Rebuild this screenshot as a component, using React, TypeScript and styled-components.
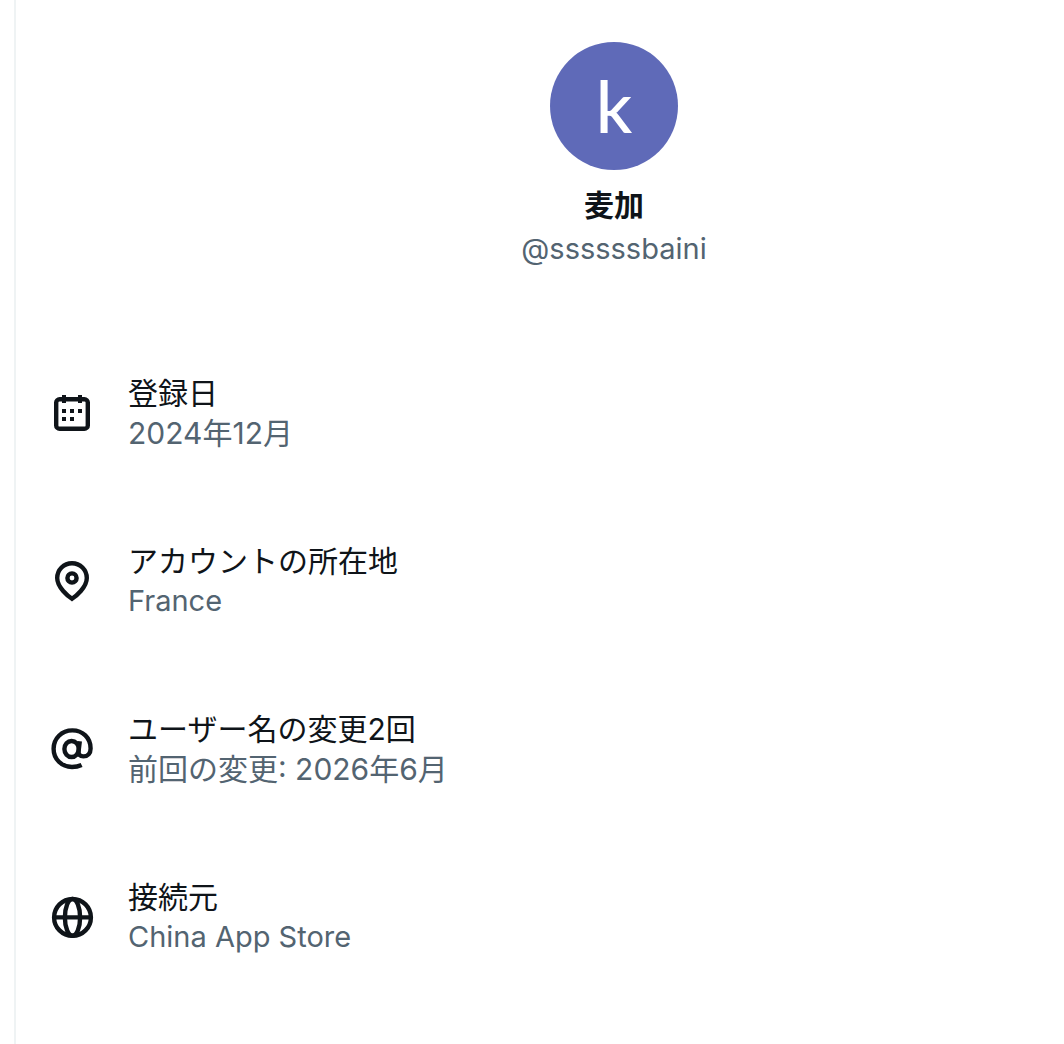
import React from "react";
import styled, { createGlobalStyle } from "styled-components";

const GlobalStyle = createGlobalStyle`
  * {
    box-sizing: border-box;
  }
  body {
    margin: 0;
    background: #ffffff;
    color: #0f1419;
    font-family: Inter, "Noto Sans CJK JP", sans-serif;
    font-size: 30px;
    line-height: 40px;
  }
`;

const Column = styled.main`
  min-height: 100vh;
  margin-left: 14px;
  border-left: 2px solid #eff3f4;
`;

const Header = styled.header`
  display: flex;
  flex-direction: column;
  align-items: center;
  padding: 42px 0 60px 148px;
`;

const Avatar = styled.div`
  display: flex;
  align-items: center;
  justify-content: center;
  width: 128px;
  height: 128px;
  margin-bottom: 15px;
  border-radius: 50%;
  background: #5f6ab8;
  color: #ffffff;
  font-family: Lato, sans-serif;
  font-size: 71px;
  font-weight: 500;
  line-height: 72px;
`;

const Name = styled.h1`
  margin: 0 0 4px;
  font-size: 30px;
  font-weight: 700;
`;

const Handle = styled.span`
  color: #536471;
  font-size: 29px;
`;

const List = styled.ul`
  margin: 0;
  padding: 0;
  list-style: none;
`;

const Row = styled.li`
  display: flex;
  align-items: center;
  gap: 32px;
  padding: 44px 32px;
`;

const Icon = styled.svg`
  flex: none;
  width: 48px;
  height: 48px;
`;

const Label = styled.div`
  color: #0f1419;
`;

const Value = styled.div<{ $latin?: boolean }>`
  color: #536471;
  font-size: ${({ $latin }) => ($latin ? 29 : 30)}px;
`;

const CalendarIcon = () => (
	<Icon viewBox="0 0 24 24" fill="none" stroke="currentColor" strokeWidth="2.2" aria-hidden="true">
		<rect x="4.1" y="5.1" width="15.8" height="14.8" rx="1.7" />
		<path
			fill="currentColor"
			stroke="none"
			d="M7 3h2v4H7zM15 3h2v4h-2zM7 10h2v2H7zM11 10h2v2h-2zM15 10h2v2h-2zM7 14h2v2H7zM11 14h2v2h-2z"
		/>
	</Icon>
);

const PinIcon = () => (
	<Icon viewBox="0 0 24 24" fill="none" stroke="currentColor" strokeWidth="2.2" aria-hidden="true">
		<circle cx="12" cy="10.5" r="2.3" />
		<path d="M12 20.9c-1.9-1.3-7.4-5.7-7.4-10.4C4.6 6.4 7.9 3.1 12 3.1s7.4 3.3 7.4 7.4c0 4.7-5.5 9.1-7.4 10.4z" />
	</Icon>
);

const AtIcon = () => (
	<Icon viewBox="0 0 24 24" fill="none" stroke="currentColor" strokeWidth="2.2" aria-hidden="true">
		<ellipse cx="11.8" cy="12" rx="3.6" ry="4" />
		<path d="M15.9 8.1l-.6 4.9c-.2 1.7.7 2.7 2.4 2.7 2.2 0 3.6-1.5 3.6-4 0-5.3-4-9-9.1-9-5.4 0-9.4 4-9.4 9.2s4 9.1 9.2 9.1c1.8 0 3.3-.3 4.8-1" />
	</Icon>
);

const GlobeIcon = () => (
	<Icon viewBox="0 0 24 24" fill="none" stroke="currentColor" strokeWidth="2.2" aria-hidden="true">
		<circle cx="12.25" cy="12.2" r="9.2" />
		<ellipse cx="12.25" cy="12.2" rx="3.8" ry="9.2" />
		<path d="M3 12.2h18.5" />
	</Icon>
);

const details = [
	{ icon: CalendarIcon, label: "登録日", value: "2024年12月" },
	{ icon: PinIcon, label: "アカウントの所在地", value: "France", latin: true },
	{ icon: AtIcon, label: "ユーザー名の変更2回", value: "前回の変更: 2026年6月" },
	{ icon: GlobeIcon, label: "接続元", value: "China App Store", latin: true },
];

const App: React.FC = () => (
	<>
		<GlobalStyle />
		<Column lang="ja">
			<Header>
				<Avatar>k</Avatar>
				<Name>麦加</Name>
				<Handle>@ssssssbaini</Handle>
			</Header>
			<List>
				{details.map(({ icon: DetailIcon, label, value, latin }) => (
					<Row key={label}>
						<DetailIcon />
						<div>
							<Label>{label}</Label>
							<Value $latin={latin}>{value}</Value>
						</div>
					</Row>
				))}
			</List>
		</Column>
	</>
);

export default App;
